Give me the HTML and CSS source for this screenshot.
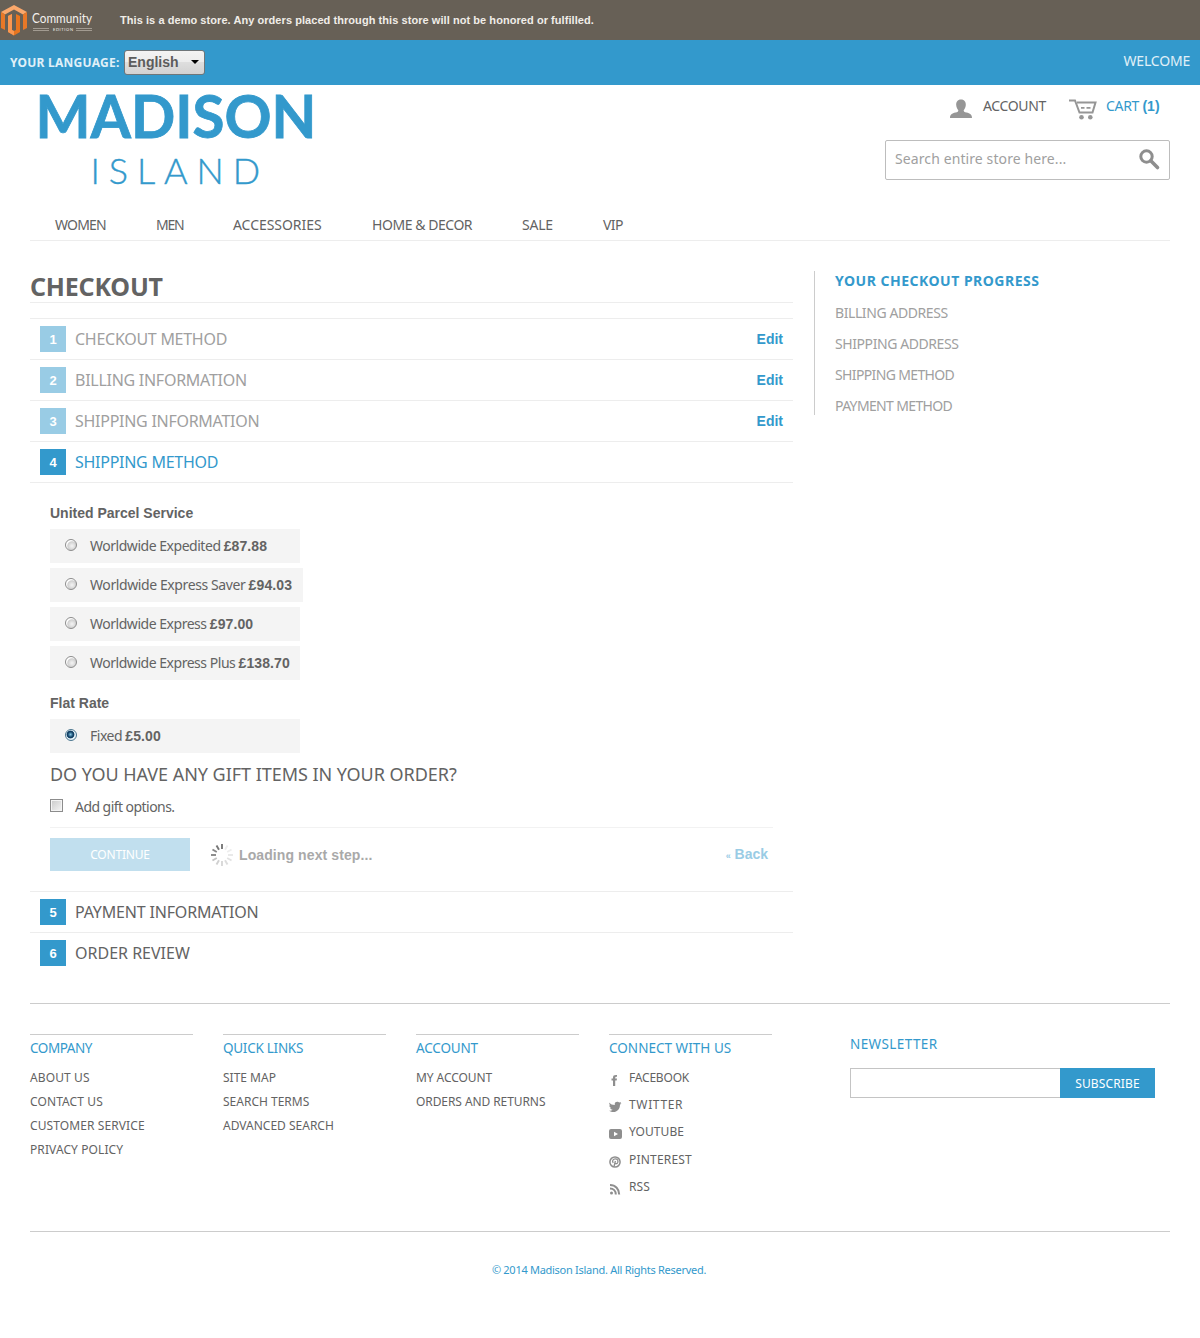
FILE: index.html
```html
<!DOCTYPE html>
<html lang="en">
<head>
<meta charset="utf-8">
<title>Checkout - Madison Island</title>
<link rel="stylesheet" href="styles.css">
</head>
<body>
<div class="demo-bar">
  <svg class="magento" width="96" height="40" viewBox="0 0 96 40">
    <path d="M1 12L14 5L27 12L23 14.500L14 9.500L5 14.500Z" fill="#fba86b"/>
    <path d="M1 12L5 14.500V30L1 28Z M27 12L23 14.500V30L27 28Z" fill="#e97827"/>
    <path d="M8 16L12 14V30L14 31L16 30V14L20 16V32L14 35.500L8 32Z" fill="#e8751f"/>
    <path d="M8 16L12 14V30L14 31V35.500L8 32Z" fill="#fb9750"/>
    <text x="32" y="23" font-family="Lato" font-size="13.500" fill="#f4f1ed" textLength="60" lengthAdjust="spacingAndGlyphs">Community</text>
    <path d="M33 28.500H49M33 30.500H49M76 28.500H92M76 30.500H92" stroke="#bcb5ab" stroke-width=".7"/>
    <text x="53" y="31" font-family="Lato" font-size="4" fill="#f4f1ed" textLength="20">EDITION</text>
  </svg>
  <p class="demo-note">This is a demo store. Any orders placed through this store will not be honored or fulfilled.</p>
</div>
<div class="lang-bar">
  <span class="lang-label">YOUR LANGUAGE:</span>
  <span class="lang-select">English<i class="caret"></i></span>
  <span class="welcome">WELCOME</span>
</div>
<div class="page">
  <header class="header">
    <svg class="logo" width="290" height="110" viewBox="0 0 290 110">
      <text class="logo-top" x="5.500" y="53" textLength="281" lengthAdjust="spacingAndGlyphs">MADISON</text>
      <text class="logo-sub" x="60.500" y="99" textLength="169.500">ISLAND</text>
    </svg>
    <div class="header-tools">
      <div class="links">
        <svg width="24" height="20" viewBox="0 0 24 20"><path d="M12 0.500C8.500 .500 7 3 7.200 6C7.400 8.500 8.300 10 9.300 11.200C9.300 12.500 8.800 13 6.500 13.600C3 14.500 1 15.500 1 19H23C23 15.500 21 14.500 17.500 13.600C15.200 13 14.700 12.500 14.700 11.200C15.700 10 16.600 8.500 16.800 6C17 3 15.500 .500 12 .500Z" fill="#969696"/></svg>
        <span class="account">ACCOUNT</span>
        <svg width="28" height="21" viewBox="0 0 28 21" fill="none" stroke="#969696" stroke-width="2"><path d="M0 1.500H6L10.500 13.500H23.500L26.500 3.500H8"/><path d="M12 8.800H15.500M17.500 8.800H21.500" stroke-width="1.800"/><circle cx="12.500" cy="18.300" r="2.300" fill="#969696" stroke="none"/><circle cx="21.300" cy="18.300" r="2.300" fill="#969696" stroke="none"/></svg>
        <span class="cart">CART <b>(1)</b></span>
      </div>
      <div class="search"><span>Search entire store here...</span>
        <svg width="21" height="21" viewBox="0 0 21 21" fill="none" stroke="#8e8e8e"><circle cx="7.500" cy="7.500" r="5.700" stroke-width="3"/><path d="M11.800 11.800L18.500 18.500" stroke-width="3.600" stroke-linecap="round"/></svg>
      </div>
    </div>
  </header>
  <nav class="nav"><span class="women">WOMEN</span><span class="men">MEN</span><span class="accessories">ACCESSORIES</span><span class="home">HOME &amp; DECOR</span><span class="sale">SALE</span><span>VIP</span></nav>
  <div class="columns">
    <main class="main">
      <h1>CHECKOUT</h1>
      <section class="step done"><span class="num">1</span><h2>CHECKOUT METHOD</h2><a>Edit</a></section>
      <section class="step done"><span class="num">2</span><h2>BILLING INFORMATION</h2><a>Edit</a></section>
      <section class="step done"><span class="num">3</span><h2>SHIPPING INFORMATION</h2><a>Edit</a></section>
      <section class="step active"><span class="num">4</span><h2>SHIPPING METHOD</h2></section>
      <div class="shipping">
        <h3>United Parcel Service</h3>
        <div class="methods">
          <label><i class="radio"></i><span>Worldwide Expedited <b>£87.88</b></span></label>
          <label class="wide"><i class="radio"></i><span>Worldwide Express Saver <b>£94.03</b></span></label>
          <label><i class="radio"></i><span>Worldwide Express <b>£97.00</b></span></label>
          <label><i class="radio"></i><span>Worldwide Express Plus <b>£138.70</b></span></label>
        </div>
        <h3 class="flat">Flat Rate</h3>
        <div class="methods"><label><i class="radio checked"></i><span>Fixed <b>£5.00</b></span></label></div>
        <h4>DO YOU HAVE ANY GIFT ITEMS IN YOUR ORDER?</h4>
        <div class="gift"><i class="checkbox"></i><span>Add gift options.</span></div>
        <div class="buttons">
          <span class="continue">CONTINUE</span>
          <svg class="spinner" width="24" height="24" viewBox="-12 -12 24 24" stroke-width="1.900">
            <path d="M0-6V-11" stroke="#777"/><path d="M0-6V-11" stroke="#eee" transform="rotate(30)"/><path d="M0-6V-11" stroke="#eee" transform="rotate(60)"/><path d="M0-6V-11" stroke="#e8e8e8" transform="rotate(90)"/><path d="M0-6V-11" stroke="#e2e2e2" transform="rotate(120)"/><path d="M0-6V-11" stroke="#ddd" transform="rotate(150)"/><path d="M0-6V-11" stroke="#d8d8d8" transform="rotate(180)"/><path d="M0-6V-11" stroke="#d0d0d0" transform="rotate(210)"/><path d="M0-6V-11" stroke="#c4c4c4" transform="rotate(240)"/><path d="M0-6V-11" stroke="#888" transform="rotate(270)"/><path d="M0-6V-11" stroke="#888" transform="rotate(300)"/><path d="M0-6V-11" stroke="#777" transform="rotate(330)"/>
          </svg>
          <span class="loading">Loading next step...</span>
          <a class="back"><small>«</small> Back</a>
        </div>
      </div>
      <section class="step"><span class="num">5</span><h2 class="payment">PAYMENT INFORMATION</h2></section>
      <section class="step"><span class="num">6</span><h2 class="review">ORDER REVIEW</h2></section>
    </main>
    <aside class="progress">
      <h2>YOUR CHECKOUT PROGRESS</h2>
      <p>BILLING ADDRESS</p><p>SHIPPING ADDRESS</p><p class="tight">SHIPPING METHOD</p><p class="tight">PAYMENT METHOD</p>
    </aside>
  </div>
  <footer class="footer">
    <div class="col company"><h5>COMPANY</h5><p>ABOUT US</p><p>CONTACT US</p><p>CUSTOMER SERVICE</p><p>PRIVACY POLICY</p></div>
    <div class="col quick"><h5>QUICK LINKS</h5><p>SITE MAP</p><p>SEARCH TERMS</p><p>ADVANCED SEARCH</p></div>
    <div class="col"><h5>ACCOUNT</h5><p>MY ACCOUNT</p><p>ORDERS AND RETURNS</p></div>
    <div class="col social"><h5>CONNECT WITH US</h5>
      <p class="facebook"><svg viewBox="0 0 13 12"><path d="M4 12V6.500H2.500V4.500H4V3.500C4 1.500 5 .800 8 1V2.800C6.600 2.700 6.200 3 6.200 4.500H8L7.700 6.500H6.200V12Z"/></svg>FACEBOOK</p>
      <p class="twitter"><svg viewBox="0 0 13 12"><path d="M0 1.500C1.500 3.200 3.500 4 5.800 4C5.400 2 6.500 .800 8.200 .800C9.200 .800 9.800 1.200 10.200 1.600L12 1L11.300 2.500L12.500 2.300L11 3.700C11 8 8 11 4.500 11C2.800 11 1.500 10.700 0 9.800C1.500 9.900 2.800 9.500 3.600 8.800C2.300 8.600 1.600 8 1.200 7H2.200C1 6.500 .400 5.600 .300 4.300L1.300 4.500C.300 3.600 .200 2.600 .200 1.500Z"/></svg>TWITTER</p>
      <p><svg viewBox="0 0 13 12"><path fill-rule="evenodd" d="M2 1H11Q13 1 13 3V9Q13 11 11 11H2Q0 11 0 9V3Q0 1 2 1ZM5 3.700V8.300L9 6Z"/></svg>YOUTUBE</p>
      <p class="pinterest"><svg viewBox="0 0 13 12"><circle cx="6" cy="6" r="5.100" fill="none" stroke="#8e8e8e" stroke-width="1.500"/><path d="M4.300 6.900C2.700 5 4 2.900 6.300 2.900C8.600 2.900 9.400 4.600 8.700 6.400C8 8 6.600 8 6 7.200M6.400 5L5 10.500" fill="none" stroke="#8e8e8e" stroke-width="1.300"/></svg>PINTEREST</p>
      <p><svg viewBox="0 0 13 12"><circle cx="2.500" cy="10" r="1.500"/><path d="M1 5.600C4.500 5.600 6.800 8 6.800 11.500M1 2C6.500 2 10.200 6 10.200 11.500" fill="none" stroke="#8e8e8e" stroke-width="2"/></svg>RSS</p>
    </div>
    <div class="newsletter"><h5>NEWSLETTER</h5><div class="subscribe"><i></i><span>SUBSCRIBE</span></div></div>
  </footer>
  <p class="copyright">© 2014 Madison Island. All Rights Reserved.</p>
</div>
</body>
</html>
```
FILE: styles.css
```css
* { box-sizing: border-box; }
body, h1, h2, h3, h4, h5, p { margin: 0; }
body {
  height: 1338px;
  background: #fff;
  color: #636363;
  font: 14px/20px "Noto Sans", sans-serif;
  white-space: nowrap;
}
h2, h4, h5 { font-weight: 400; }
svg { display: block; flex: none; overflow: visible; }

.demo-bar { display: flex; align-items: center; height: 40px; background: #676056; color: #f0ede8; }
.demo-note { margin-left: 24px; font: bold 11px/20px "Liberation Sans", sans-serif; letter-spacing: .06px; }

.lang-bar { display: flex; align-items: center; height: 45px; padding: 0 10px; background: #3399cc; color: #e0f0f8; }
.lang-label { width: 114px; font-weight: 700; font-size: 12px; letter-spacing: .25px; }
.lang-select {
  display: flex; align-items: center; justify-content: space-between;
  width: 81px; height: 25px; padding: 0 5px 2px 3px;
  border: 1px solid #6f7679; border-radius: 3px;
  background: linear-gradient(#f3f3f3, #ececec 50%, #dedede 50%, #d2d2d2);
  color: #5c5c5c; font: bold 14px/20px "Liberation Sans", sans-serif;
}
.caret { border: 4px solid transparent; border-top-color: #000; border-bottom: 0; }
.welcome { margin: -3px 0 0 auto; letter-spacing: -.2px; }

.page { padding: 0 30px; }
.header { display: flex; justify-content: space-between; height: 125px; }
.logo { fill: #3399cc; stroke: #3399cc; font-family: Lato, sans-serif; }
.logo-top { font-size: 59px; font-weight: 700; stroke-width: .8px; }
.logo-sub { font-size: 36px; font-weight: 300; stroke-width: .4px; }
.header-tools { width: 285px; }
.links { display: flex; height: 55px; padding: 14px 0 0 64px; }
.links .account { width: 86px; margin: -3px 0 0 10px; letter-spacing: -.35px; }
.cart { margin: -3px 0 0 9px; color: #3399cc; letter-spacing: -.3px; }
.cart b { font: bold 14px/20px "Liberation Sans", sans-serif; letter-spacing: 0; }
.search {
  display: flex; align-items: center; justify-content: space-between;
  height: 40px; padding: 0 9px 2px;
  border: 1px solid #bdbdbd; border-radius: 2px; color: #a0a0a0; letter-spacing: .1px;
}

.nav { display: flex; height: 31px; padding: 5px 25px 0; border-bottom: 1px solid #ededed; letter-spacing: -.6px; }
.women { width: 101px; letter-spacing: -.8px; }
.men { width: 77px; letter-spacing: -1.2px; }
.accessories { width: 139px; letter-spacing: -.05px; }
.home { width: 150px; letter-spacing: -.45px; }
.sale { width: 81px; letter-spacing: -.2px; }

.columns { display: flex; justify-content: space-between; height: 763px; padding-top: 30px; border-bottom: 1px solid #ccc; }
.main { width: 763px; }
h1 { height: 32px; margin-bottom: 15px; border-bottom: 1px solid #ededed; font-size: 25px; line-height: 30px; letter-spacing: -.2px; }
.step { display: flex; align-items: center; height: 41px; padding: 0 10px; border-top: 1px solid #ededed; }
.step h2 { margin-left: 9px; font-size: 16px; letter-spacing: -.27px; }
.step .payment { letter-spacing: -.17px; }
.step .review { letter-spacing: 0; }
.num { width: 26px; height: 26px; background: #3399cc; color: #fff; font: bold 13px/28px "Liberation Sans", sans-serif; text-align: center; }
.step a { margin-left: auto; color: #3399cc; font: bold 14px/20px "Liberation Sans", sans-serif; }
.done h2 { color: #a0a0a0; }
.done .num { background: #99cce5; }
.active h2 { color: #3399cc; }

.shipping { height: 409px; padding: 20px 20px 0; border-top: 1px solid #ededed; }
h3 { height: 26px; font: bold 14px/20px "Liberation Sans", sans-serif; }
.flat { margin-top: 13px; }
.methods { display: flex; flex-direction: column; gap: 5px; }
.methods label { display: flex; align-items: center; width: 250px; height: 34px; padding-left: 15px; background: #f4f4f4; letter-spacing: -.47px; }
.methods .wide { width: 253px; letter-spacing: -.4px; }
.methods b { font: bold 14px/20px "Liberation Sans", sans-serif; letter-spacing: .1px; }
.radio { width: 12px; height: 12px; margin: -2px 13px 0 0; border: 1px solid #8c8c8c; border-radius: 50%; background: radial-gradient(circle at 60% 60%, #eee 10%, #cfcfcf 50%, #fff 62%); }
.radio.checked { border-color: #4c7790; background: radial-gradient(circle at 45% 45%, #83c6e5 0, #103f64 35%, #103f64 45%, #e6f2f8 55%); }
h4 { margin-top: 11px; font-size: 18px; line-height: 20px; letter-spacing: -.04px; }
.gift { display: flex; align-items: center; height: 43px; padding-top: 3px; letter-spacing: -.55px; }
.checkbox { width: 13px; height: 13px; margin: -3px 12px 0 0; border: 1px solid #8c8c8c; background: linear-gradient(135deg, #c9c9c9, #f6f6f6); box-shadow: inset 0 0 0 1px #f4f4f4; }
.buttons { display: flex; height: 44px; padding-top: 10px; border-top: 1px solid #f2f2f2; }
.continue { width: 140px; height: 33px; background: #c1dfee; color: #fff; font-size: 12px; line-height: 33px; text-align: center; letter-spacing: -.2px; }
.spinner { margin: 5px 5px 0 20px; }
.loading, .back { font: bold 14px/34px "Liberation Sans", sans-serif; }
.loading { color: #a9a9a9; letter-spacing: .1px; }
.back { margin: -1px 5px 0 auto; color: #99cce5; }
.back small { font-size: 9px; }

.progress { width: 356px; height: 144px; padding-left: 20px; border-left: 1px solid #ccc; color: #a0a0a0; letter-spacing: -.42px; }
.progress h2 { margin-bottom: 12px; color: #3399cc; font-size: 14px; font-weight: 700; letter-spacing: .5px; }
.progress p { height: 31px; }
.progress .tight { letter-spacing: -.64px; }

.footer { display: flex; gap: 30px; height: 228px; padding-top: 30px; border-bottom: 1px solid #ccc; font-size: 12px; letter-spacing: -.08px; }
.col { width: 163px; height: 180px; border-top: 1px solid #ccc; }
h5 { color: #3399cc; font-size: 13.500px; line-height: 26px; letter-spacing: -.16px; }
.col h5 { margin-bottom: 5px; }
.company { letter-spacing: .1px; }
.company h5 { letter-spacing: -.45px; }
.quick { letter-spacing: 0; }
.quick h5 { letter-spacing: -.27px; }
.social h5 { letter-spacing: .03px; }
.col p { height: 24px; line-height: 24px; }
.social p { display: flex; height: 27.200px; letter-spacing: .05px; }
.social .facebook { letter-spacing: -.2px; }
.social .twitter { letter-spacing: .65px; }
.social .pinterest { letter-spacing: .2px; }
.social svg { width: 13px; height: 12px; margin: 8px 7px 0 0; fill: #8e8e8e; }
.newsletter { width: 305px; margin-left: 48px; }
.newsletter h5 { margin-bottom: 13px; line-height: 21px; letter-spacing: .4px; }
.subscribe { display: flex; height: 30px; }
.subscribe i { width: 210px; border: 1px solid #c4c4c4; border-right: 0; }
.subscribe span { width: 95px; background: #3399cc; color: #fff; line-height: 31px; text-align: center; letter-spacing: .15px; }
.copyright { padding: 28px 2px 0 0; color: #3399cc; font-size: 11px; text-align: center; letter-spacing: -.28px; }
```
